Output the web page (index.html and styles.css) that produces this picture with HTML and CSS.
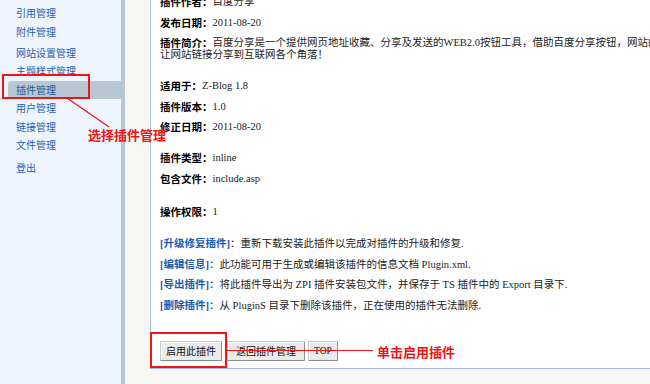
FILE: index.html
```html
<!DOCTYPE html>
<html lang="zh-CN">
<head>
<meta charset="utf-8">
<title>插件管理</title>
<link rel="stylesheet" href="styles.css">
</head>
<body>
<div class="layout">
  <aside class="sidebar">
    <ul class="nav">
      <li><a href="#">引用管理</a></li>
      <li><a href="#">附件管理</a></li>
      <li class="sep"><a href="#">网站设置管理</a></li>
      <li><a href="#">主题样式管理</a></li>
      <li class="active"><a href="#">插件管理</a></li>
      <li><a href="#">用户管理</a></li>
      <li><a href="#">链接管理</a></li>
      <li><a href="#">文件管理</a></li>
      <li class="sep2"><a href="#">登出</a></li>
    </ul>
  </aside>
  <div class="bar"></div>
  <div class="gutter"></div>
  <main class="main">
    <section class="panel">
      <p class="first"><b>插件作者：</b>百度分享</p>
      <p><b>发布日期：</b>2011-08-20</p>
      <p><b>插件简介：</b>百度分享是一个提供网页地址收藏、分享及发送的WEB2.0按钮工具，借助百度分享按钮，网站的浏览者<br>让网站链接分享到互联网各个角落！</p>
      <p class="gap"><b>适用于：</b>Z-Blog 1.8</p>
      <p><b>插件版本：</b>1.0</p>
      <p><b>修正日期：</b>2011-08-20</p>
      <p class="gap"><b>插件类型：</b>inline</p>
      <p><b>包含文件：</b>include.asp</p>
      <p class="gap3"><b>操作权限：</b>1</p>
      <p class="gap2"><b class="act">[升级修复插件]</b>：重新下载安装此插件以完成对插件的升级和修复.</p>
      <p><b class="act">[编辑信息]</b>：此功能可用于生成或编辑该插件的信息文档 Plugin.xml.</p>
      <p><b class="act">[导出插件]</b>：将此插件导出为 ZPI 插件安装包文件，并保存于 TS 插件中的 Export 目录下.</p>
      <p><b class="act">[删除插件]</b>：从 PluginS 目录下删除该插件，正在使用的插件无法删除.</p>
      <div class="buttons">
        <button class="btn btn-enable" type="button">启用此插件</button>
        <button class="btn btn-back" type="button">返回插件管理</button>
        <button class="btn btn-top" type="button">TOP</button>
      </div>
    </section>
  </main>

  <div class="mark mark-nav"></div>
  <svg class="pointer" width="120" height="40" viewBox="0 0 120 40">
    <line x1="67" y1="8" x2="109" y2="37" stroke="#f01010" stroke-width="1.2"/>
  </svg>
  <div class="note note-nav">选择插件管理</div>

  <div class="mark mark-btn"></div>
  <div class="hline"></div>
  <div class="note note-btn">单击启用插件</div>
</div>
</body>
</html>
```

FILE: styles.css
```css
html, body {
  margin: 0;
  padding: 0;
}
body {
  width: 650px;
  height: 384px;
  overflow: hidden;
  background: #f6f6f4;
  font-family: "Liberation Serif", "Noto Sans CJK SC", serif;
}
.layout {
  position: relative;
  display: flex;
  height: 384px;
}
.sidebar {
  width: 121px;
  flex: none;
  background: #edf4fb;
}
.nav {
  list-style: none;
  margin: 0;
  padding: 4px 0 0 8px;
  font-family: "Noto Sans CJK SC", sans-serif;
  font-size: 10px;
}
.nav li {
  height: 18.5px;
  line-height: 18.5px;
}
.nav li.sep { margin-top: 2.5px; }
.nav li.sep2 { margin-top: 4.5px; }
.nav a {
  display: block;
  padding-left: 8px;
  color: #1f5fb3;
  text-decoration: none;
}
.nav li.active a {
  background: #b6c7d1;
  border-radius: 3px 0 0 3px;
  color: #2a5a9a;
}
.bar {
  width: 4px;
  flex: none;
  background: #b5c7d1;
}
.gutter {
  width: 25px;
  flex: none;
  background: #f6f6f4;
}
.main {
  flex: none;
  width: 600px;
}
.panel {
  display: flex;
  flex-direction: column;
  align-items: flex-start;
  height: 368px;
  box-sizing: content-box;
  background: #ffffff;
  border-left: 1px solid #a7c0d7;
  border-bottom: 1px solid #9dbad2;
  padding-left: 9px;
  font-size: 10.5px;
  color: #222;
  overflow: hidden;
}
.panel p {
  margin: 0 0 8.5px 0;
  line-height: 12px;
  white-space: nowrap;
}
.panel p.first { margin-top: -4px; }
.panel p.gap { margin-top: 10.5px; }
.panel p.gap2 { margin-top: 11.5px; }
.panel p.gap3 { margin-top: 13px; }
.panel b {
  font-weight: bold;
  color: #000;
  line-height: 12px;
  vertical-align: top;
  font-family: "Noto Sans CJK SC", sans-serif;
}
.panel b.act {
  color: #1a5bb0;
  font-family: "Liberation Serif", "Noto Sans CJK SC", serif;
}
.buttons {
  display: flex;
  margin-top: 21px;
}
.btn {
  height: 20px;
  margin: 0 3px 0 0;
  padding: 0 6px;
  white-space: nowrap;
  font-family: "Noto Sans CJK SC", sans-serif;
  font-size: 10px;
  line-height: 18px;
  color: #111;
  background: #ebebe9;
  border: 1px solid;
  border-color: #c8c8c8 #8c8c8c #8c8c8c #c8c8c8;
  box-shadow: inset 1px 1px 0 #ffffff;
  border-radius: 1px;
}
.btn-enable { margin-right: 5px; padding: 0 5px; }
.btn-back { padding: 0 8px; }
.btn-top {
  width: 30px;
  padding: 0;
  font-family: "Liberation Serif", serif;
  font-size: 9.5px;
}

.mark {
  position: absolute;
  box-sizing: border-box;
  border: 2px solid #f01414;
}
.mark-nav {
  left: 2px;
  top: 74px;
  width: 88px;
  height: 25px;
}
.pointer {
  position: absolute;
  left: 0;
  top: 90px;
}
.note {
  position: absolute;
  color: #f01414;
  font-family: "Noto Sans CJK SC", sans-serif;
  font-weight: bold;
  font-size: 13px;
  line-height: 15px;
  white-space: nowrap;
}
.note-nav {
  left: 88px;
  top: 127px;
}
.mark-btn {
  left: 150px;
  top: 332px;
  width: 77px;
  height: 36px;
}
.hline {
  position: absolute;
  left: 227px;
  top: 350px;
  width: 146px;
  height: 1px;
  background: #f01414;
}
.note-btn {
  left: 377px;
  top: 344px;
}
```
